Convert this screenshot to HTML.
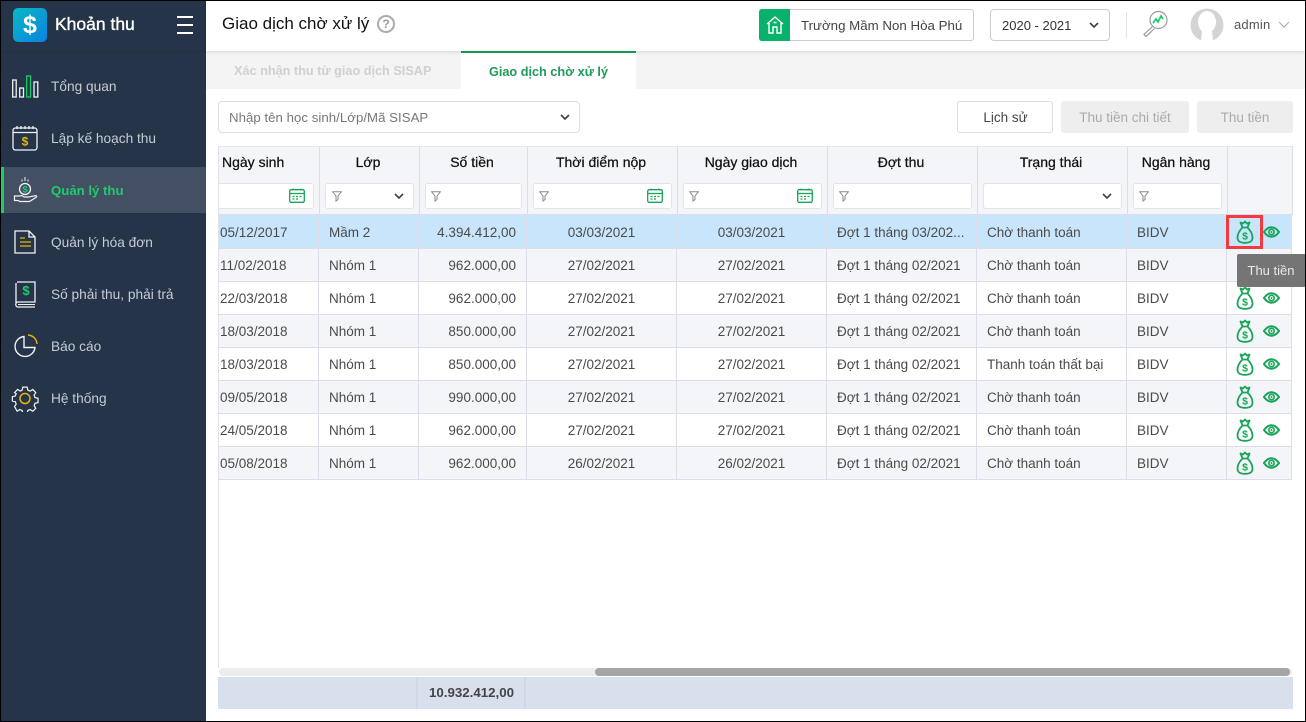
<!DOCTYPE html>
<html><head><meta charset="utf-8"><style>
*{box-sizing:border-box}
html,body{margin:0;padding:0;width:1306px;height:722px;overflow:hidden;background:#fff;font-family:"Liberation Sans","Noto Sans CJK SC",sans-serif;font-size:13.5px;color:#4a4a4a}
.a{position:absolute;white-space:nowrap}
#side{left:1px;top:1px;width:205px;height:720px;background:#253449}
.m{position:absolute;left:51px;color:#c6ccd4;font-size:13.700px;line-height:20px;white-space:nowrap;margin-top:1px}
.ic{position:absolute;left:11px;width:28px;height:28px}
.th{position:absolute;top:146px;height:69px;background:#f4f5f9;border-right:1px solid #dcdde8;border-top:1px solid #e6e7ee;text-align:center;color:#111;padding:6px 3px 0 0;line-height:18px;font-size:14px;-webkit-text-stroke:.25px #111}
.fi{position:absolute;top:183px;height:26px;background:#fff;border:1px solid #e3e4ea;border-radius:3px}
.row{position:absolute;left:219px;width:1073px;height:33px;border-bottom:1px solid #dcdde8}
.c{position:absolute;top:0;height:32px;line-height:33px;border-right:1px solid #dcdde8;padding:0 10px;white-space:nowrap;overflow:hidden;color:#4a4a4a}
.r{text-align:right;padding-right:2px}.ct{text-align:center}
.btn{position:absolute;top:101px;height:32px;border-radius:3px;text-align:center;line-height:33px}
</style></head><body>
<svg width="0" height="0" style="position:absolute">
<symbol id="bag" viewBox="0 0 18 24"><g fill="none" stroke="#17a558" stroke-width="1.800" stroke-linejoin="round" stroke-linecap="round"><path d="M6.500 7.500C3.500 10.500 1.500 14 1.500 17.500 1.500 21 3.500 22.800 9 22.800s7.500-1.800 7.500-5.300C16.500 14 14.500 10.500 11.500 7.500Z"/><path d="M6.500 7.500 4.500 2.500 7 3.500 9 1.500 11 3.500 13.500 2.500 11.500 7.500"/></g><text x="9" y="19.500" font-size="10.500" font-weight="700" text-anchor="middle" fill="#17a558" font-family="Liberation Sans">$</text></symbol>
<symbol id="eye" viewBox="0 0 18 12"><path d="M1 6C4 2 6.500 1 9 1s5 1 8 5c-3 4-5.500 5-8 5S4 10 1 6Z" fill="none" stroke="#17a558" stroke-width="2.100"/><circle cx="9" cy="6" r="2.800" fill="none" stroke="#17a558" stroke-width="1.700"/><circle cx="9" cy="6" r="1" fill="#17a558"/></symbol>
<symbol id="cal" viewBox="0 0 16 15"><rect x=".7" y="1.700" width="14.600" height="12.600" rx="1.500" fill="none" stroke="#17a558" stroke-width="1.300"/><path d="M1 5.500h14" stroke="#17a558" stroke-width="1.300"/><path d="M4 .5v2M12 .5v2M3.500 8.500h2M7 8.500h2M10.500 8.500h2M3.500 11h2M7 11h2" stroke="#17a558" stroke-width="1.200"/></symbol>
<symbol id="fil" viewBox="0 0 10 11"><path d="M.7.8h8.600L6 5v3.500L4 10V5Z" fill="none" stroke="#8a8a92" stroke-width="1"/></symbol>
<symbol id="chev" viewBox="0 0 10 6"><path d="M1 1l4 4 4-4" fill="none" stroke="#3c3c50" stroke-width="1.600"/></symbol>
</svg>

<div class="a" style="left:0;top:0;width:1306px;height:722px;border:1px solid #000;z-index:50;pointer-events:none"></div>

<div class="a" id="side">
<div class="a" style="left:0;top:50px;width:205px;height:1px;background:#223044"></div>
<div class="a" style="left:12px;top:7px;width:34px;height:34px;border-radius:5px;background:linear-gradient(135deg,#0ab8c2,#0a82e2);color:#fff;font-size:25px;font-weight:700;text-align:center;line-height:34px">$</div>
<div class="a" style="left:54px;top:11px;color:#fff;font-size:17.500px;line-height:24px;-webkit-text-stroke:.35px #fff">Khoản thu</div>
<div class="a" style="left:176px;top:15px;width:16px;height:18px;border-top:2.500px solid #fff;border-bottom:2.500px solid #fff"></div>
<div class="a" style="left:176px;top:22.750px;width:16px;height:2.500px;background:#fff"></div>
<div class="a" style="left:0;top:166px;width:205px;height:46px;background:#435064"></div>
<div class="a" style="left:0;top:166px;width:3px;height:46px;background:#1bce6b"></div>
</div>
<div style="position:absolute;left:0;top:0">
<svg class="ic" style="top:72px" viewBox="0 0 28 28"><g fill="none" stroke="#f2f2f2" stroke-width="1.300"><rect x="1.700" y="8" width="3.500" height="17"/><rect x="8.700" y="16" width="3.800" height="9"/><rect x="23" y="10" width="3.800" height="15"/></g><rect x="15.700" y="4" width="3.800" height="21" fill="none" stroke="#1bce6b" stroke-width="1.300"/></svg>
<div class="m" style="top:76px">Tổng quan</div>
<svg class="ic" style="top:124px" viewBox="0 0 28 28"><rect x="2" y="4" width="24" height="22" rx="2.500" fill="none" stroke="#f2f2f2" stroke-width="1.300"/><path d="M2.500 8.500h23M6 2v3M10 2v3M14 2v3M18 2v3M22 2v3" stroke="#f2f2f2" stroke-width="1.300"/><text x="14" y="21.500" text-anchor="middle" font-size="12" font-weight="700" fill="#e7b40c">$</text></svg>
<div class="m" style="top:128px">Lập kế hoạch thu</div>
<svg class="ic" style="top:176px" viewBox="0 0 28 28"><circle cx="14" cy="13" r="5.500" fill="none" stroke="#f2f2f2" stroke-width="1.300"/><text x="14" y="16.500" text-anchor="middle" font-size="9.500" font-weight="700" fill="#1bce6b">$</text><path d="M14 1v4M11 3.500v2M17 3.500v2" stroke="#f2f2f2"/><path d="M3.500 20h5c2-.8 3.500 0 4.500 1h4.500l7-1.300c1.500 0 1.500 1 .5 1.700l-6.500 4.100H9l-2-1H3.500Z" fill="none" stroke="#f2f2f2" stroke-width="1.200"/></svg>
<div class="m" style="top:180px;color:#1bce6b;font-weight:700;font-size:13.200px">Quản lý thu</div>
<svg class="ic" style="top:228px" viewBox="0 0 28 28"><path d="M4 3h14l6 6v16H4ZM18 3v6h6" fill="none" stroke="#f2f2f2" stroke-width="1.300"/><path d="M9 10h5M9 14h11M9 18h11" stroke="#e7b40c" stroke-width="1.300"/></svg>
<div class="m" style="top:232px">Quản lý hóa đơn</div>
<svg class="ic" style="top:280px" viewBox="0 0 28 28"><path d="M6 2h18v20H7c-3 0-3 5 0 5h17M5 24V3" fill="none" stroke="#f2f2f2" stroke-width="1.300"/><path d="M7 24.500h17" stroke="#f2f2f2"/><text x="15" y="15" text-anchor="middle" font-size="13" font-weight="700" fill="#1bce6b">$</text></svg>
<div class="m" style="top:284px">Số phải thu, phải trả</div>
<svg class="ic" style="top:332px" viewBox="0 0 28 28"><path d="M13 4.500a10 10 0 1 0 11 11H13Z" fill="none" stroke="#f2f2f2" stroke-width="1.400"/><path d="M17 3a9.500 9.500 0 0 1 9 9" fill="none" stroke="#e7b40c" stroke-width="1.400"/></svg>
<div class="m" style="top:336px">Báo cáo</div>
<svg class="ic" style="top:384px" viewBox="0 0 28 28"><path d="M11.500 1.500h5l.8 3.500 2.700 1.100 3-1.900 3.400 3.600-1.900 3 1 2.700 3.500.8v5l-3.500.8-1 2.700 1.900 3-3.400 3.400-3-1.900-2.700 1-.8 3.200h-5l-.8-3.200-2.700-1-3 1.900L2 24l1.900-3-1-2.700-3.400-.8v-5l3.400-.8 1-2.700L2 7.800l3.500-3.600 3 1.900 2.200-1.100Z" transform="translate(1.800 1.800) scale(.87)" fill="none" stroke="#f2f2f2" stroke-width="1.400"/><circle cx="14" cy="14.500" r="5" fill="none" stroke="#e7b40c" stroke-width="1.500"/></svg>
<div class="m" style="top:388px">Hệ thống</div>
</div>

<!-- top bar -->
<div class="a" style="left:206px;top:1px;width:1099px;height:50px;background:#fff;box-shadow:0 1px 4px rgba(0,0,0,.12);z-index:2"></div>
<div class="a" style="left:222px;top:12px;font-size:17px;line-height:24px;color:#111;z-index:3">Giao dịch chờ xử lý</div>
<div class="a" style="left:377px;top:15px;width:18px;height:18px;border:2px solid #aaa;border-radius:50%;color:#999;font-size:12px;font-weight:700;text-align:center;line-height:14px;z-index:3">?</div>
<div class="a" style="left:759px;top:9px;width:215px;height:32px;border:1px solid #ccc;border-radius:3px;z-index:3;background:#fff"></div>
<div class="a" style="left:759px;top:9px;width:31px;height:32px;background:#08b26a;border-radius:3px 0 0 3px;z-index:3"></div>
<svg class="a" style="left:766px;top:15px;z-index:4" width="18" height="20" viewBox="0 0 18 20"><path d="M1 9l8-7 8 7M3 8v10h4v-6h4v6h4V8M7.500 7.500h3" fill="none" stroke="#fff" stroke-width="1.400"/></svg>
<div class="a" style="left:801px;top:16px;line-height:20px;color:#444;z-index:3;font-size:13.300px">Trường Mầm Non Hòa Phú</div>
<div class="a" style="left:990px;top:9px;width:120px;height:32px;border:1px solid #ccc;border-radius:4px;z-index:3;background:#fff"></div>
<div class="a" style="left:1002px;top:16px;line-height:20px;color:#333;z-index:3;font-size:13px">2020 - 2021</div>
<svg class="a" style="left:1089px;top:22px;z-index:3" width="10" height="6"><use href="#chev"/></svg>
<div class="a" style="left:1126px;top:12px;width:1px;height:26px;background:#e4e4e4;z-index:3"></div>
<svg class="a" style="left:1142px;top:9px;z-index:3" width="28" height="28" viewBox="0 0 28 28"><circle cx="16.500" cy="11" r="8.500" fill="#fff" stroke="#999" stroke-width="1.200"/><path d="M11 14l3-4 2 3 3-6 2 3" fill="none" stroke="#1bce6b" stroke-width="1.800"/><path d="M10.500 17.500 2 25.500l2 2 8.500-8" fill="#fff" stroke="#999" stroke-width="1.200"/></svg>
<svg class="a" style="left:1190px;top:8px;z-index:3" width="34" height="34" viewBox="0 0 34 34"><circle cx="17" cy="17" r="16.500" fill="#d4d4d4"/><ellipse cx="17" cy="14" rx="9" ry="11" fill="#fff"/><path d="M12 22h10l1 12H11Z" fill="#fff"/></svg>
<div class="a" style="left:1234px;top:15px;line-height:20px;color:#555;z-index:3;font-size:13px;letter-spacing:.2px">admin</div>
<svg class="a" style="left:1278px;top:21px;z-index:3" width="12" height="8" viewBox="0 0 12 8"><path d="M1 1l5 5 5-5" fill="none" stroke="#aaa" stroke-width="1.100"/></svg>

<!-- tabs -->
<div class="a" style="left:206px;top:51px;width:1099px;height:38px;background:#f4f4f4"></div>
<div class="a" style="left:234px;top:61px;line-height:20px;font-weight:700;color:#d0d0d0;font-size:12.700px">Xác nhận thu từ giao dịch SISAP</div>
<div class="a" style="left:461px;top:51px;width:175px;height:38px;background:#fff;border-top:2px solid #119b52;z-index:3;text-align:center;color:#1e9a5a;font-weight:700;font-size:12.700px;line-height:38px">Giao dịch chờ xử lý</div>

<!-- toolbar -->
<div class="a" style="left:218px;top:101px;width:362px;height:32px;border:1px solid #ddd;border-radius:4px"></div>
<div class="a" style="left:229px;top:108px;line-height:20px;color:#777;font-size:13.200px;letter-spacing:.05px">Nhập tên học sinh/Lớp/Mã SISAP</div>
<svg class="a" style="left:560px;top:114px" width="10" height="6"><use href="#chev"/></svg>
<div class="btn" style="left:957px;width:96px;border:1px solid #ddd;color:#444;line-height:32px;padding-left:1px">Lịch sử</div>
<div class="btn" style="left:1061px;width:128px;background:#eee;color:#aaa">Thu tiền chi tiết</div>
<div class="btn" style="left:1197px;width:96px;background:#eee;color:#aaa">Thu tiền</div>

<!-- table head -->
<div class="a" style="left:218px;top:146px;width:1px;height:522px;background:#e0e1ea"></div>
<div class="th" style="left:219px;width:101px;text-align:left;padding-left:3px">Ngày sinh</div>
<div class="th" style="left:320px;width:100px">Lớp</div>
<div class="th" style="left:420px;width:108px">Số tiền</div>
<div class="th" style="left:528px;width:150px">Thời điểm nộp</div>
<div class="th" style="left:678px;width:150px">Ngày giao dịch</div>
<div class="th" style="left:828px;width:150px">Đợt thu</div>
<div class="th" style="left:978px;width:150px">Trạng thái</div>
<div class="th" style="left:1128px;width:100px">Ngân hàng</div>
<div class="th" style="left:1228px;width:65px"></div>
<div class="a" style="left:219px;top:214px;width:1074px;height:1px;background:#dcdde8"></div>
<div class="a" style="left:219px;top:215px;width:1073px;height:1px;background:#c9e5fc"></div>

<div class="fi" style="left:219px;width:95px;border-left:0;border-radius:0 3px 3px 0"></div>
<svg class="a" style="left:289px;top:188px" width="16" height="15"><use href="#cal"/></svg>
<div class="fi" style="left:325px;width:89px"></div>
<svg class="a" style="left:332px;top:191px" width="10" height="11"><use href="#fil"/></svg>
<svg class="a" style="left:394px;top:193px" width="10" height="6"><use href="#chev"/></svg>
<div class="fi" style="left:425px;width:97px"></div>
<svg class="a" style="left:431px;top:191px" width="10" height="11"><use href="#fil"/></svg>
<div class="fi" style="left:533px;width:139px"></div>
<svg class="a" style="left:539px;top:191px" width="10" height="11"><use href="#fil"/></svg>
<svg class="a" style="left:647px;top:188px" width="16" height="15"><use href="#cal"/></svg>
<div class="fi" style="left:683px;width:139px"></div>
<svg class="a" style="left:689px;top:191px" width="10" height="11"><use href="#fil"/></svg>
<svg class="a" style="left:797px;top:188px" width="16" height="15"><use href="#cal"/></svg>
<div class="fi" style="left:833px;width:139px"></div>
<svg class="a" style="left:839px;top:191px" width="10" height="11"><use href="#fil"/></svg>
<div class="fi" style="left:983px;width:139px"></div>
<svg class="a" style="left:1102px;top:193px" width="10" height="6"><use href="#chev"/></svg>
<div class="fi" style="left:1133px;width:89px"></div>
<svg class="a" style="left:1139px;top:191px" width="10" height="11"><use href="#fil"/></svg>

<!-- rows -->
<div class="row" style="top:216px;height:33px;background:#c9e5fc">
<div class="c" style="left:0;width:100px;padding-left:1px">05/12/2017</div><div class="c" style="left:100px;width:100px">Mầm 2</div><div class="c r" style="left:200px;width:108px;padding-right:10px">4.394.412,00</div><div class="c ct" style="left:308px;width:150px">03/03/2021</div><div class="c ct" style="left:458px;width:150px">03/03/2021</div><div class="c" style="left:608px;width:150px;padding:0 0 0 10px">Đợt 1 tháng 03/202...</div><div class="c" style="left:758px;width:150px">Chờ thanh toán</div><div class="c" style="left:908px;width:100px">BIDV</div><div class="c" style="left:1008px;width:65px"></div></div>
<div class="row" style="top:249px;background:#f4f5f9">
<div class="c" style="left:0;width:100px;padding-left:1px">11/02/2018</div><div class="c" style="left:100px;width:100px">Nhóm 1</div><div class="c r" style="left:200px;width:108px;padding-right:10px">962.000,00</div><div class="c ct" style="left:308px;width:150px">27/02/2021</div><div class="c ct" style="left:458px;width:150px">27/02/2021</div><div class="c" style="left:608px;width:150px;padding:0 0 0 10px">Đợt 1 tháng 02/2021</div><div class="c" style="left:758px;width:150px">Chờ thanh toán</div><div class="c" style="left:908px;width:100px">BIDV</div><div class="c" style="left:1008px;width:65px"></div></div>
<div class="row" style="top:282px;background:#fff">
<div class="c" style="left:0;width:100px;padding-left:1px">22/03/2018</div><div class="c" style="left:100px;width:100px">Nhóm 1</div><div class="c r" style="left:200px;width:108px;padding-right:10px">962.000,00</div><div class="c ct" style="left:308px;width:150px">27/02/2021</div><div class="c ct" style="left:458px;width:150px">27/02/2021</div><div class="c" style="left:608px;width:150px;padding:0 0 0 10px">Đợt 1 tháng 02/2021</div><div class="c" style="left:758px;width:150px">Chờ thanh toán</div><div class="c" style="left:908px;width:100px">BIDV</div><div class="c" style="left:1008px;width:65px"></div></div>
<div class="row" style="top:315px;background:#f4f5f9">
<div class="c" style="left:0;width:100px;padding-left:1px">18/03/2018</div><div class="c" style="left:100px;width:100px">Nhóm 1</div><div class="c r" style="left:200px;width:108px;padding-right:10px">850.000,00</div><div class="c ct" style="left:308px;width:150px">27/02/2021</div><div class="c ct" style="left:458px;width:150px">27/02/2021</div><div class="c" style="left:608px;width:150px;padding:0 0 0 10px">Đợt 1 tháng 02/2021</div><div class="c" style="left:758px;width:150px">Chờ thanh toán</div><div class="c" style="left:908px;width:100px">BIDV</div><div class="c" style="left:1008px;width:65px"></div></div>
<div class="row" style="top:348px;background:#fff">
<div class="c" style="left:0;width:100px;padding-left:1px">18/03/2018</div><div class="c" style="left:100px;width:100px">Nhóm 1</div><div class="c r" style="left:200px;width:108px;padding-right:10px">850.000,00</div><div class="c ct" style="left:308px;width:150px">27/02/2021</div><div class="c ct" style="left:458px;width:150px">27/02/2021</div><div class="c" style="left:608px;width:150px;padding:0 0 0 10px">Đợt 1 tháng 02/2021</div><div class="c" style="left:758px;width:150px">Thanh toán thất bại</div><div class="c" style="left:908px;width:100px">BIDV</div><div class="c" style="left:1008px;width:65px"></div></div>
<div class="row" style="top:381px;background:#f4f5f9">
<div class="c" style="left:0;width:100px;padding-left:1px">09/05/2018</div><div class="c" style="left:100px;width:100px">Nhóm 1</div><div class="c r" style="left:200px;width:108px;padding-right:10px">990.000,00</div><div class="c ct" style="left:308px;width:150px">27/02/2021</div><div class="c ct" style="left:458px;width:150px">27/02/2021</div><div class="c" style="left:608px;width:150px;padding:0 0 0 10px">Đợt 1 tháng 02/2021</div><div class="c" style="left:758px;width:150px">Chờ thanh toán</div><div class="c" style="left:908px;width:100px">BIDV</div><div class="c" style="left:1008px;width:65px"></div></div>
<div class="row" style="top:414px;background:#fff">
<div class="c" style="left:0;width:100px;padding-left:1px">24/05/2018</div><div class="c" style="left:100px;width:100px">Nhóm 1</div><div class="c r" style="left:200px;width:108px;padding-right:10px">962.000,00</div><div class="c ct" style="left:308px;width:150px">27/02/2021</div><div class="c ct" style="left:458px;width:150px">27/02/2021</div><div class="c" style="left:608px;width:150px;padding:0 0 0 10px">Đợt 1 tháng 02/2021</div><div class="c" style="left:758px;width:150px">Chờ thanh toán</div><div class="c" style="left:908px;width:100px">BIDV</div><div class="c" style="left:1008px;width:65px"></div></div>
<div class="row" style="top:447px;background:#f4f5f9">
<div class="c" style="left:0;width:100px;padding-left:1px">05/08/2018</div><div class="c" style="left:100px;width:100px">Nhóm 1</div><div class="c r" style="left:200px;width:108px;padding-right:10px">962.000,00</div><div class="c ct" style="left:308px;width:150px">26/02/2021</div><div class="c ct" style="left:458px;width:150px">26/02/2021</div><div class="c" style="left:608px;width:150px;padding:0 0 0 10px">Đợt 1 tháng 02/2021</div><div class="c" style="left:758px;width:150px">Chờ thanh toán</div><div class="c" style="left:908px;width:100px">BIDV</div><div class="c" style="left:1008px;width:65px"></div></div>

<!-- row icons -->
<svg class="a" style="left:1236px;top:220px" width="18" height="24"><use href="#bag"/></svg><svg class="a" style="left:1263px;top:226px" width="17" height="12"><use href="#eye"/></svg>
<svg class="a" style="left:1236px;top:286px" width="18" height="24"><use href="#bag"/></svg><svg class="a" style="left:1263px;top:292px" width="17" height="12"><use href="#eye"/></svg>
<svg class="a" style="left:1236px;top:319px" width="18" height="24"><use href="#bag"/></svg><svg class="a" style="left:1263px;top:325px" width="17" height="12"><use href="#eye"/></svg>
<svg class="a" style="left:1236px;top:352px" width="18" height="24"><use href="#bag"/></svg><svg class="a" style="left:1263px;top:358px" width="17" height="12"><use href="#eye"/></svg>
<svg class="a" style="left:1236px;top:385px" width="18" height="24"><use href="#bag"/></svg><svg class="a" style="left:1263px;top:391px" width="17" height="12"><use href="#eye"/></svg>
<svg class="a" style="left:1236px;top:418px" width="18" height="24"><use href="#bag"/></svg><svg class="a" style="left:1263px;top:424px" width="17" height="12"><use href="#eye"/></svg>
<svg class="a" style="left:1236px;top:451px" width="18" height="24"><use href="#bag"/></svg><svg class="a" style="left:1263px;top:457px" width="17" height="12"><use href="#eye"/></svg>

<div class="a" style="left:1226px;top:215px;width:37px;height:34px;border:3px solid #f5393f;z-index:5"></div>
<div class="a" style="left:1237px;top:254px;width:68px;height:33px;background:#757575;color:#e8e8e8;text-align:center;line-height:33px;border-radius:2px 0 0 2px;z-index:6;font-size:13px">Thu tiền</div>

<!-- scrollbar + footer -->
<div class="a" style="left:219px;top:668px;width:1073px;height:8px;background:#ececec;border-radius:4px"></div>
<div class="a" style="left:595px;top:668px;width:695px;height:8px;background:#a5a5a5;border-radius:4px"></div>
<div class="a" style="left:218px;top:677px;width:1075px;height:32px;background:#d9e0ed"></div>
<div class="a" style="left:416px;top:677px;width:2px;height:32px;background:#d2d6e6"></div>
<div class="a" style="left:524px;top:677px;width:2px;height:32px;background:#d2d6e6"></div>
<div class="a" style="left:418px;top:683px;width:96px;text-align:right;line-height:20px;font-weight:700;color:#444;font-size:13.300px">10.932.412,00</div>
</body></html>
